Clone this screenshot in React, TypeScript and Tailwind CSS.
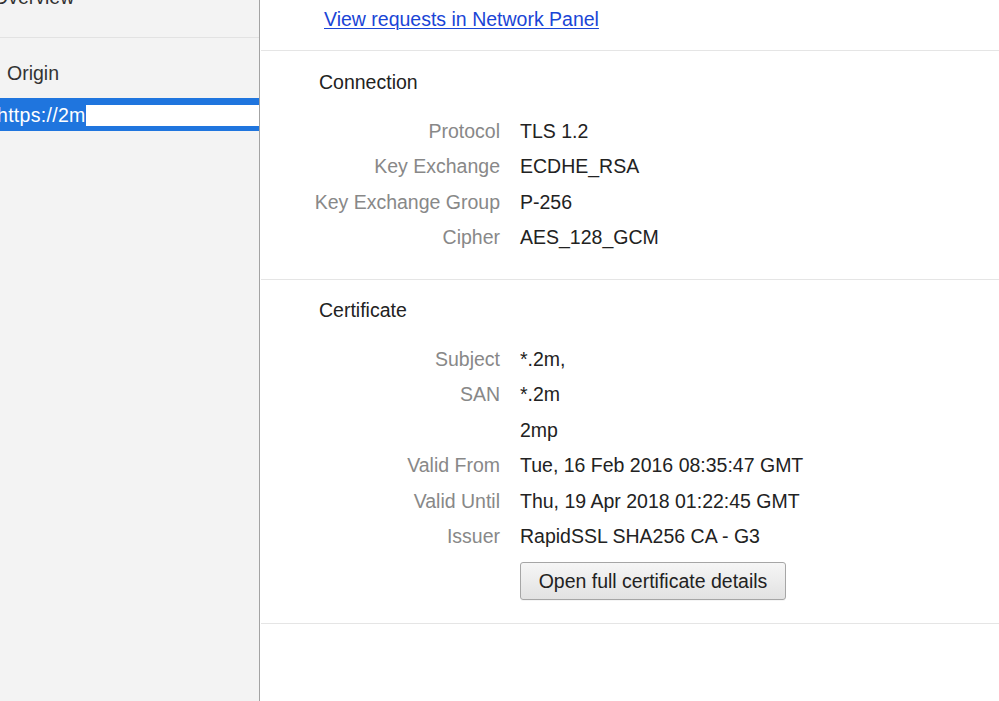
import React from "react";

const F = { fontFamily: '"Liberation Sans", Arial, Helvetica, sans-serif' };

function Row({ label, value }: { label: string; value: string }) {
  return (
    <>
      <div className="h-[35.5px] flex items-center justify-end whitespace-nowrap text-[#888888]">{label}</div>
      <div className="h-[35.5px] flex items-center whitespace-nowrap text-[#222222]">{value}</div>
    </>
  );
}

export default function App() {
  return (
    <div
      className="w-[999px] h-[701px] flex bg-white overflow-hidden text-[19.5px] leading-[24px] antialiased"
      style={F}
    >
      {/* Sidebar */}
      <div className="w-[260px] shrink-0 h-full bg-[#f3f3f3] border-r border-[#a3a3a3] flex flex-col overflow-hidden">
        <div className="h-[37px] shrink-0 overflow-hidden">
          <div className="-mt-[15px] -ml-[7px] text-[#333333] whitespace-nowrap">Overview</div>
        </div>
        <div className="h-px bg-[#e2e2e2] shrink-0" />
        <div className="mt-[23px] pl-[7px] text-[#333333]">Origin</div>
        <div className="mt-[13px] h-[33px] bg-[#1f75de] flex">
          <span className="-ml-[3px] w-[89px] shrink-0 text-white whitespace-nowrap self-center tracking-[0.3px]">https://2m</span>
          <div className="flex-1 mt-[7px] h-[21px] bg-white" />
        </div>
      </div>

      {/* Main */}
      <div className="flex-1 flex flex-col">
        <div className="h-[50px] shrink-0 pt-[7px] pl-[64px]">
          <span className="text-[#1a45d6] underline underline-offset-[2px] decoration-1">View requests in Network Panel</span>
        </div>
        <div className="h-px ml-px bg-[#e5e5e5] shrink-0" />

        <div className="pt-[19px] pb-[24px] pl-[51px]">
          <div className="ml-[8px] text-[#222222]">Connection</div>
          <div className="mt-[19px] grid grid-cols-[189px_1fr] gap-x-[20px]">
            <Row label="Protocol" value="TLS 1.2" />
            <Row label="Key Exchange" value="ECDHE_RSA" />
            <Row label="Key Exchange Group" value="P-256" />
            <Row label="Cipher" value="AES_128_GCM" />
          </div>
        </div>
        <div className="h-px ml-px bg-[#e5e5e5] shrink-0" />

        <div className="pt-[18px] pb-[23px] pl-[51px]">
          <div className="ml-[8px] text-[#222222]">Certificate</div>
          <div className="mt-[19px] grid grid-cols-[189px_1fr] gap-x-[20px]">
            <Row label="Subject" value="*.2m," />
            <Row label="SAN" value="*.2m" />
            <Row label="" value="2mp" />
            <Row label="Valid From" value="Tue, 16 Feb 2016 08:35:47 GMT" />
            <Row label="Valid Until" value="Thu, 19 Apr 2018 01:22:45 GMT" />
            <Row label="Issuer" value="RapidSSL SHA256 CA - G3" />
            <div />
            <div className="mt-[7.5px]">
              <button className="h-[38px] w-[266px] rounded-[3px] border border-[#a6a6a6] bg-gradient-to-b from-[#f6f6f6] to-[#e2e2e2] text-[#222222] whitespace-nowrap shadow-[0_1px_0_rgba(0,0,0,0.04)]">
                Open full certificate details
              </button>
            </div>
          </div>
        </div>
        <div className="h-px ml-px bg-[#e5e5e5] shrink-0" />
      </div>
    </div>
  );
}
